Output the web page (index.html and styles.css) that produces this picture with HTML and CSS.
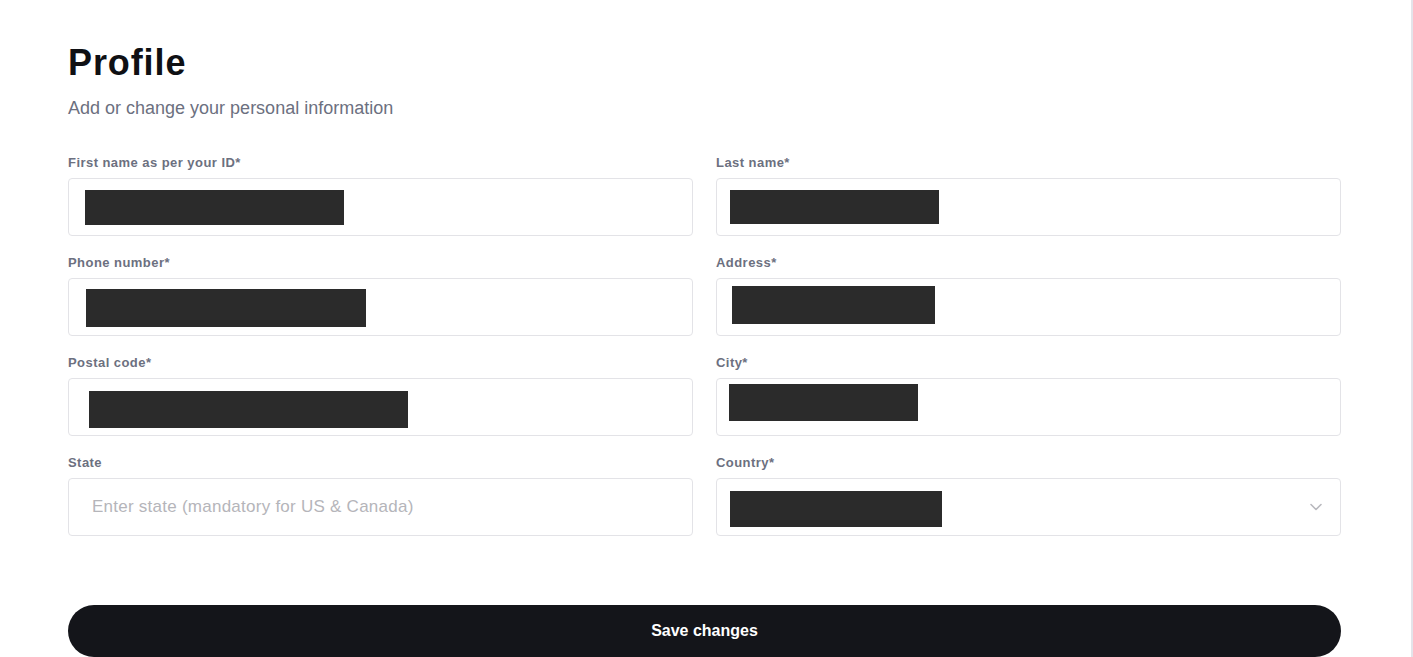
FILE: index.html
```html
<!DOCTYPE html>
<html lang="en">
<head>
<meta charset="utf-8">
<title>Profile</title>
<link rel="stylesheet" href="styles.css">
</head>
<body>
<div class="page">
  <main class="profile">
    <h1 class="title">Profile</h1>
    <p class="subtitle">Add or change your personal information</p>
    <form class="form">
      <div class="grid">
        <div class="field">
          <label class="label">First name as per your ID*</label>
          <div class="input"><span class="redact r-first"></span></div>
        </div>
        <div class="field">
          <label class="label">Last name*</label>
          <div class="input"><span class="redact r-last"></span></div>
        </div>
        <div class="field">
          <label class="label">Phone number*</label>
          <div class="input"><span class="redact r-phone"></span></div>
        </div>
        <div class="field">
          <label class="label">Address*</label>
          <div class="input"><span class="redact r-address"></span></div>
        </div>
        <div class="field">
          <label class="label">Postal code*</label>
          <div class="input"><span class="redact r-postal"></span></div>
        </div>
        <div class="field">
          <label class="label">City*</label>
          <div class="input"><span class="redact r-city"></span></div>
        </div>
        <div class="field">
          <label class="label">State</label>
          <div class="input"><span class="placeholder">Enter state (mandatory for US &amp; Canada)</span></div>
        </div>
        <div class="field">
          <label class="label">Country*</label>
          <div class="input select">
            <span class="redact r-country"></span>
            <svg class="chevron" width="12" height="8" viewBox="0 0 12 8" aria-hidden="true"><path d="M1 1.5 L6 6.5 L11 1.5" fill="none" stroke="#b9b9be" stroke-width="1.6" stroke-linecap="round" stroke-linejoin="round"/></svg>
          </div>
        </div>
      </div>
      <button type="button" class="save">Save changes</button>
    </form>
  </main>
</div>
</body>
</html>
```

FILE: styles.css
```css
* { box-sizing: border-box; }
html, body { margin: 0; padding: 0; background: #ffffff; }
body {
  font-family: "Liberation Sans", Arial, sans-serif;
  color: #14151a;
  overflow: hidden;
}
.page {
  width: 1413px;
  height: 657px;
  border-right: 2px solid #e4e4ea;
}
.profile {
  width: 1273px;
  margin-left: 68px;
  padding-top: 43px;
}
.title {
  margin: 0;
  font-size: 36px;
  line-height: 40px;
  font-weight: 700;
  letter-spacing: 0.9px;
  color: #0f1014;
}
.subtitle {
  margin: 13px 0 0;
  font-size: 18px;
  line-height: 24px;
  color: #6c7080;
}
.form { margin-top: 35px; }
.grid {
  display: grid;
  grid-template-columns: 625px 625px;
  column-gap: 23px;
  row-gap: 19px;
}
.field { display: flex; flex-direction: column; }
.label {
  font-size: 13px;
  line-height: 16px;
  font-weight: 700;
  color: #6c7080;
  margin-bottom: 7px;
  letter-spacing: 0.45px;
}
.input {
  position: relative;
  height: 58px;
  border: 1px solid #e3e3e7;
  border-radius: 4px;
  display: flex;
  align-items: center;
  padding: 0 23px;
}
.placeholder {
  font-size: 17px;
  letter-spacing: 0.25px;
  color: #b5b5ba;
}
.redact {
  position: absolute;
  background: #2b2b2b;
}
.r-first { left: 16px; top: 11px; width: 259px; height: 35px; }
.r-last { left: 13px; top: 11px; width: 209px; height: 34px; }
.r-phone { left: 17px; top: 10px; width: 280px; height: 38px; }
.r-address { left: 15px; top: 7px; width: 203px; height: 38px; }
.r-postal { left: 20px; top: 12px; width: 319px; height: 37px; }
.r-city { left: 12px; top: 5px; width: 189px; height: 37px; }
.r-country { left: 13px; top: 12px; width: 212px; height: 36px; }
.select { justify-content: flex-end; padding-right: 18px; }
.chevron { display: block; }
.save {
  display: block;
  width: 100%;
  height: 52px;
  margin-top: 69px;
  border: 0;
  border-radius: 26px;
  background: #14151a;
  color: #ffffff;
  font-family: "Liberation Sans", Arial, sans-serif;
  font-size: 16px;
  font-weight: 700;
  cursor: pointer;
}
```
